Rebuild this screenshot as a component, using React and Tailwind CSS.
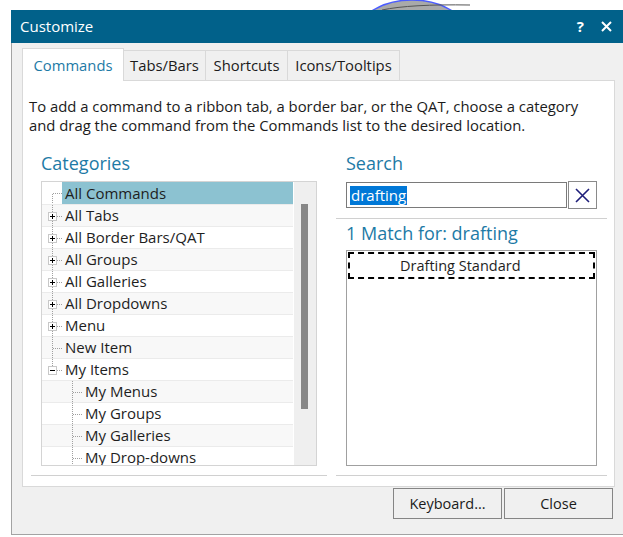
import React from 'react';

const rows = [
  { label: 'All Commands', level: 0, box: null, first: true, selected: true },
  { label: 'All Tabs', level: 0, box: '+' },
  { label: 'All Border Bars/QAT', level: 0, box: '+' },
  { label: 'All Groups', level: 0, box: '+' },
  { label: 'All Galleries', level: 0, box: '+' },
  { label: 'All Dropdowns', level: 0, box: '+' },
  { label: 'Menu', level: 0, box: '+' },
  { label: 'New Item', level: 0, box: null },
  { label: 'My Items', level: 0, box: '-', last: true },
  { label: 'My Menus', level: 1 },
  { label: 'My Groups', level: 1 },
  { label: 'My Galleries', level: 1 },
  { label: 'My Drop-downs', level: 1 },
];

const TreeGutter = ({ row }) => {
  const dot = { stroke: '#a0a0a0', strokeDasharray: '1 1', shapeRendering: 'crispEdges' };
  if (row.level === 1) {
    return (
      <svg width="40" height="22" className="shrink-0">
        <line x1="30.5" y1="0" x2="30.5" y2="22" style={dot} />
        <line x1="31" y1="11.5" x2="40" y2="11.5" style={dot} />
      </svg>
    );
  }
  return (
    <svg width="20" height="22" className="shrink-0">
      <line x1="10.5" y1={row.first ? 12 : 0} x2="10.5" y2={row.last ? 11 : 22} style={dot} />
      <line x1="11" y1="11.5" x2="20" y2="11.5" style={dot} />
      {row.box && (
        <g shapeRendering="crispEdges">
          <rect x="6.5" y="7.5" width="8" height="8" fill="#fff" stroke="#c8c8c8" />
          <line x1="8" y1="11.5" x2="13" y2="11.5" stroke="#000" />
          {row.box === '+' && <line x1="10.5" y1="9" x2="10.5" y2="14" stroke="#000" />}
        </g>
      )}
    </svg>
  );
};

const App = () => {
  return (
    <div className="relative w-[623px] h-[537px] overflow-hidden bg-white font-['Open_Sans','Noto_Sans',sans-serif] text-[#1b1b1b]">
      {/* shape behind the window */}
      <svg width="623" height="10" className="block">
        <ellipse cx="412" cy="46" rx="62" ry="46" fill="#a9a9a9" stroke="#4b5cff" strokeWidth="1.5" />
        <path d="M382 10 Q410 4 470 5" fill="none" stroke="#555" strokeWidth="1" />
      </svg>

      <div className="ml-[11px] w-[620px] flex flex-col">
        {/* title bar */}
        <div className="h-[33px] bg-[#01618a] flex items-center pl-[9px] pr-[19px] text-white">
          <span className="text-[15px] leading-none">Customize</span>
          <div className="ml-auto flex items-center gap-[17px]">
            <span className="text-[15px] font-bold leading-none">?</span>
            <svg width="11" height="11" viewBox="0 0 11 11">
              <path d="M1 1 L10 10 M10 1 L1 10" stroke="#fff" strokeWidth="2" />
            </svg>
          </div>
        </div>

        {/* body */}
        <div className="h-[492px] bg-[#f0f0f0] border-l border-b border-[#a3a3a3] pl-[10px] pt-[5px]">
          <div className="w-[593px] flex flex-col">
            <div className="flex items-end h-[32px] text-[14.8px]">
              <div className="relative z-10 -mb-px h-[33px] w-[102px] bg-white border border-b-0 border-[#d9d9d9] flex items-center justify-center text-[#1d7aa6]">
                Commands
              </div>
              <div className="h-[30px] w-[82px] border-t border-r border-[#d9d9d9] flex items-center justify-center">Tabs/Bars</div>
              <div className="h-[30px] w-[82px] border-t border-r border-[#d9d9d9] flex items-center justify-center">Shortcuts</div>
              <div className="h-[30px] w-[112px] border-t border-r border-[#d9d9d9] flex items-center justify-center">Icons/Tooltips</div>
            </div>

            <div className="h-[407px] bg-white border border-[#d9d9d9] pt-[16px]">
              <p className="pl-[6px] text-[14.85px] leading-[19px]">
                To add a command to a ribbon tab, a border bar, or the QAT, choose a category
                <br />
                and drag the command from the Commands list to the desired location.
              </p>

              <div className="mt-[16px] pl-[8px] flex">
                {/* categories */}
                <div className="w-[296px] flex flex-col">
                  <div className="pl-[10px] h-[24px] text-[18px] leading-[24px] text-[#1d7aa6]">Categories</div>
                  <div className="mt-[6px] ml-[10px] w-[276px] h-[285px] border border-[#d4d4d4] flex">
                    <div className="flex-1 overflow-hidden text-[15px] text-[#1e1e1e]">
                      {rows.map((row, i) => (
                        <div
                          key={row.label}
                          className={`h-[22px] flex items-stretch ${i > 0 ? 'border-t border-[#ebebeb]' : ''} ${i % 2 === 1 ? 'bg-[#f8f8f8]' : 'bg-white'}`}
                        >
                          <TreeGutter row={row} />
                          <span className={`flex-1 pl-[3px] flex items-center ${row.selected ? 'bg-[#8cc2d1]' : ''}`}>
                            {row.label}
                          </span>
                        </div>
                      ))}
                    </div>
                    <div className="w-[22px] ml-px bg-[#efefef] pt-[22px] pl-[7px]">
                      <div className="w-[7px] h-[205px] bg-[#878787]" />
                    </div>
                  </div>
                  <div className="mt-[9px] h-px bg-[#d0d0d0]" />
                </div>

                {/* search */}
                <div className="ml-[9px] w-[271px] flex flex-col">
                  <div className="pl-[10px] h-[24px] text-[18px] leading-[24px] text-[#1d7aa6]">Search</div>
                  <div className="mt-[6px] pl-[10px] flex items-center gap-px">
                    <div className="w-[221px] h-[26px] border border-[#7a7a7a] flex items-center pl-[3px]">
                      <span className="bg-[#0078d7] text-white text-[15px] leading-[19px] px-px">drafting</span>
                    </div>
                    <div className="w-[29px] h-[28px] border border-[#8a8a8a] flex items-center justify-center">
                      <svg width="15" height="15" viewBox="0 0 15 15">
                        <path d="M1 1 L14 14 M14 1 L1 14" stroke="#1f1f7a" strokeWidth="1.6" />
                      </svg>
                    </div>
                  </div>
                  <div className="mt-[9px] h-px bg-[#d0d0d0]" />
                  <div className="mt-[2px] pl-[10px] h-[24px] text-[18px] leading-[24px] text-[#1d7aa6]">1 Match for: drafting</div>
                  <div className="mt-[5px] ml-[10px] w-[251px] h-[216px] border border-[#a0a0a0] p-px">
                    <div className="h-[27px] border-2 border-dashed border-black flex items-center pl-[50px] text-[14.5px] text-[#1e1e1e]">
                      Drafting Standard
                    </div>
                  </div>
                  <div className="mt-[9px] h-px bg-[#d0d0d0]" />
                </div>
              </div>
            </div>

            <div className="mt-px pr-[2px] flex justify-end gap-[2px] text-[14.5px]">
              <button className="w-[109px] h-[31px] border border-[#858585] bg-[#f0f0f0] flex items-center justify-center">Keyboard...</button>
              <button className="w-[109px] h-[31px] border border-[#858585] bg-[#f0f0f0] flex items-center justify-center">Close</button>
            </div>
          </div>
        </div>
      </div>
    </div>
  );
};

export default App;
